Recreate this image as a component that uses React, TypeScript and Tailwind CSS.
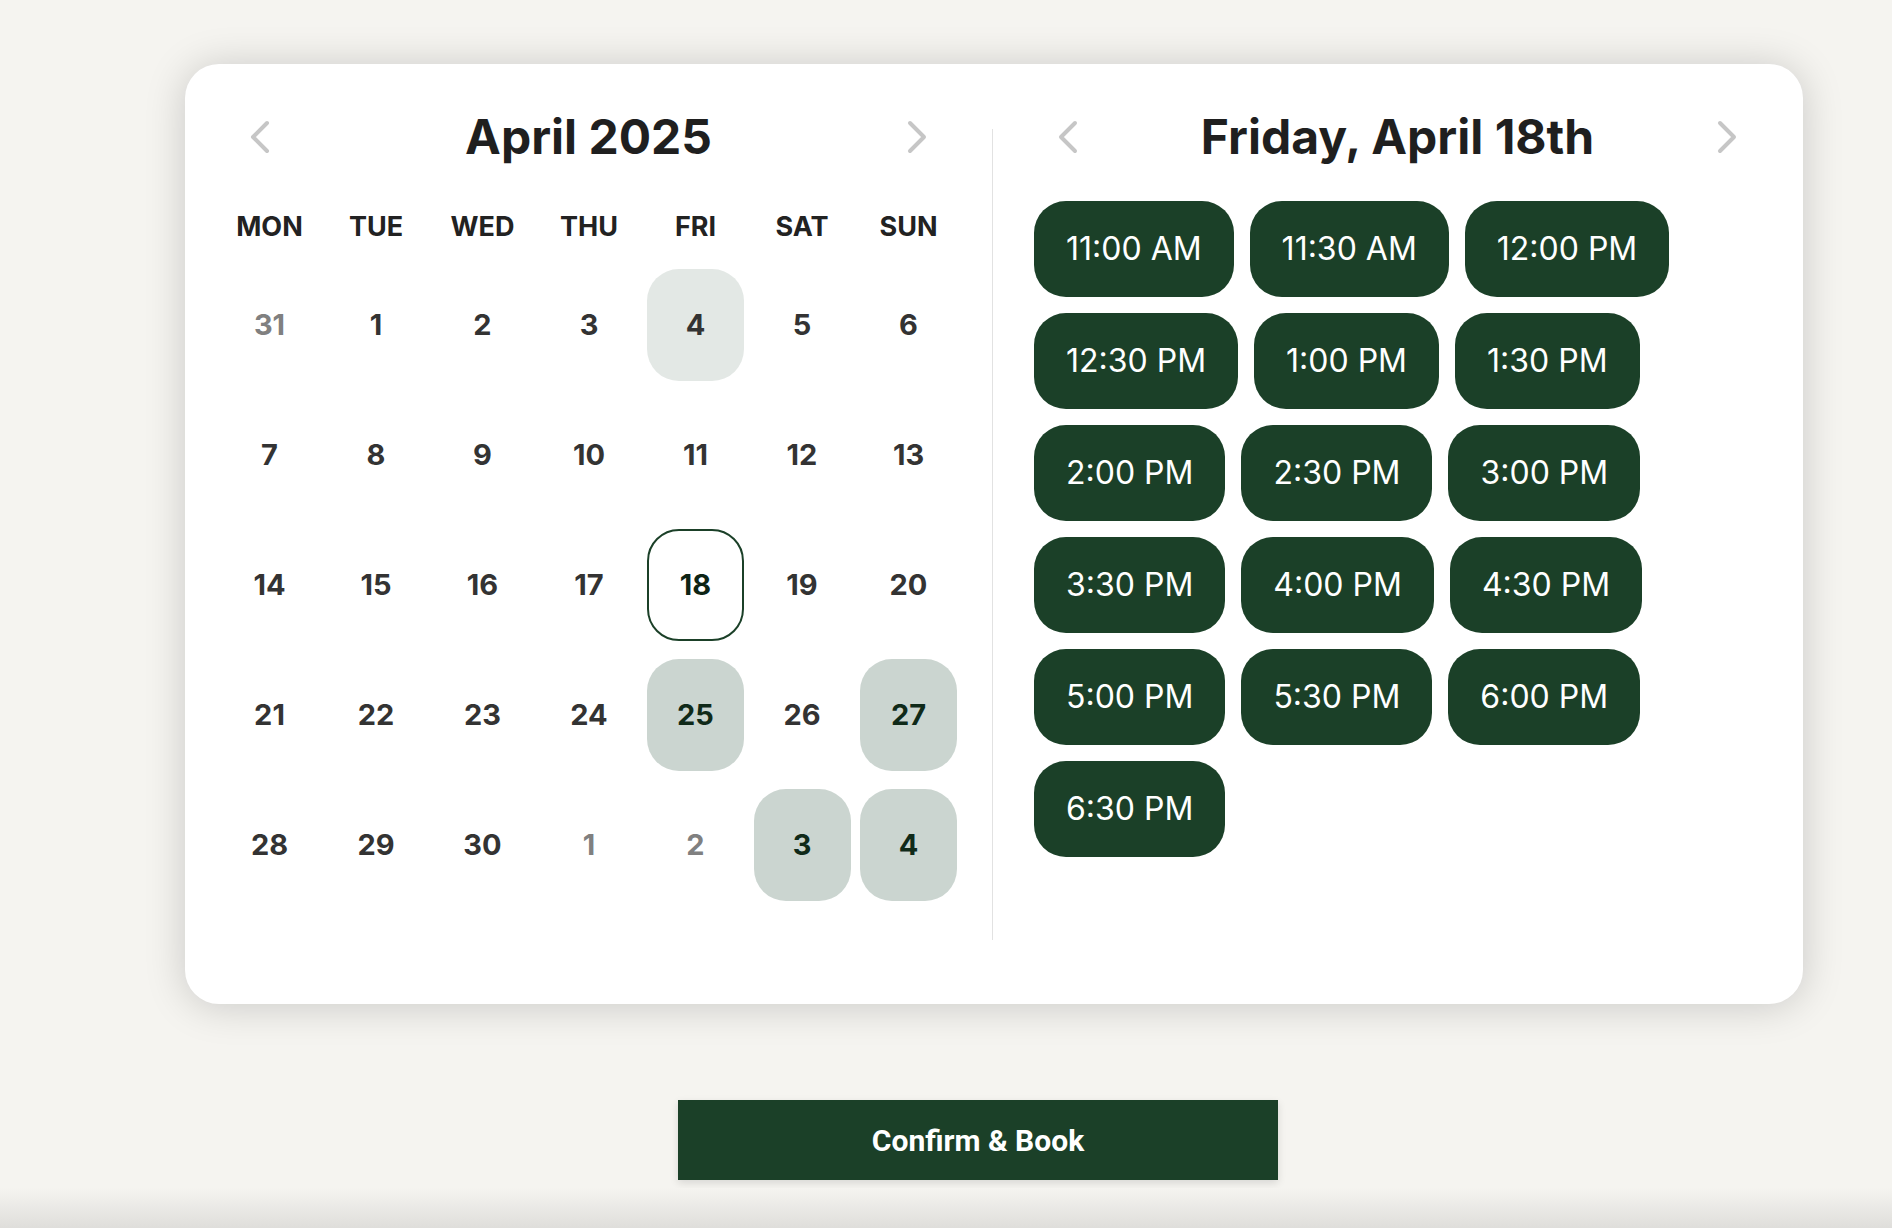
import React from "react";

type DayCell = {
  n: number;
  muted?: boolean;
  tone?: "light" | "avail" | "selected";
};

const weekdays = ["MON", "TUE", "WED", "THU", "FRI", "SAT", "SUN"];

const weeks: DayCell[][] = [
  [{ n: 31, muted: true }, { n: 1 }, { n: 2 }, { n: 3 }, { n: 4, tone: "light" }, { n: 5 }, { n: 6 }],
  [{ n: 7 }, { n: 8 }, { n: 9 }, { n: 10 }, { n: 11 }, { n: 12 }, { n: 13 }],
  [{ n: 14 }, { n: 15 }, { n: 16 }, { n: 17 }, { n: 18, tone: "selected" }, { n: 19 }, { n: 20 }],
  [{ n: 21 }, { n: 22 }, { n: 23 }, { n: 24 }, { n: 25, tone: "avail" }, { n: 26 }, { n: 27, tone: "avail" }],
  [{ n: 28 }, { n: 29 }, { n: 30 }, { n: 1, muted: true }, { n: 2, muted: true }, { n: 3, tone: "avail" }, { n: 4, tone: "avail" }],
];

const slots = [
  "11:00 AM", "11:30 AM", "12:00 PM",
  "12:30 PM", "1:00 PM", "1:30 PM",
  "2:00 PM", "2:30 PM", "3:00 PM",
  "3:30 PM", "4:00 PM", "4:30 PM",
  "5:00 PM", "5:30 PM", "6:00 PM",
  "6:30 PM",
];

function Chevron({ dir }: { dir: "left" | "right" }) {
  return (
    <svg width="20" height="34" viewBox="0 0 20 34" fill="none" className="shrink-0">
      <polyline
        points={dir === "left" ? "17,3 3,17 17,31" : "3,3 17,17 3,31"}
        stroke="#c6c6c6"
        strokeWidth="4"
        strokeLinecap="round"
        strokeLinejoin="round"
      />
    </svg>
  );
}

function PanelHeader({ title }: { title: string }) {
  return (
    <div className="flex h-[48px] items-center justify-between px-[33px]">
      <Chevron dir="left" />
      <h2 className="font-['Inter',sans-serif] text-[48px] leading-[48px] font-bold text-[#1f1f1f]">
        {title}
      </h2>
      <Chevron dir="right" />
    </div>
  );
}

function dayClass(d: DayCell) {
  if (d.tone === "selected") return "border-2 border-[#1b4028] bg-white text-[#0d2415]";
  if (d.tone === "avail") return "bg-[#cbd5d0] text-[#102a19]";
  if (d.tone === "light") return "bg-[#e3e8e5] text-[#333333]";
  if (d.muted) return "text-[#808080]";
  return "text-[#333333]";
}

function MonthCalendar() {
  return (
    <div className="w-[743px] shrink-0">
      <PanelHeader title="April 2025" />
      <div className="ml-[4px] mt-[50px] grid w-[736px] grid-cols-7 gap-x-[9.5px]">
        {weekdays.map((w) => (
          <div
            key={w}
            className="text-center font-['Inter',sans-serif] text-[27px] leading-[32px] font-bold text-[#222222]"
          >
            {w}
          </div>
        ))}
      </div>
      <div className="ml-[4px] mt-[26px] grid w-[736px] grid-cols-7 gap-x-[9.5px] gap-y-[18px]">
        {weeks.flat().map((d, i) => (
          <div
            key={i}
            className={`flex h-[112px] items-center justify-center rounded-[32px] font-['Inter',sans-serif] text-[29px] font-bold ${dayClass(d)}`}
          >
            {d.n}
          </div>
        ))}
      </div>
    </div>
  );
}

function TimeSlots() {
  return (
    <div className="w-[745px] shrink-0">
      <PanelHeader title="Friday, April 18th" />
      <div className="mt-[40px] flex flex-wrap gap-4 pl-[9px]">
        {slots.map((s) => (
          <button
            key={s}
            className="flex h-[96px] items-center rounded-[32px] bg-[#1b4028] px-8 font-['Inter',sans-serif] text-[32px] text-white"
          >
            {s}
          </button>
        ))}
      </div>
    </div>
  );
}

export default function App() {
  return (
    <div className="flex h-[1228px] flex-col overflow-hidden bg-[#f5f4f0]">
      <div className="ml-[185px] w-[1586px] pt-[64px]">
        <div className="flex h-[940px] w-[1618px] rounded-[34px] bg-white px-8 pt-[49px] pb-[47px] shadow-[0_2px_40px_rgba(0,0,0,0.18)]">
          <MonthCalendar />
          <div className="mx-[32px] mt-[16px] mb-[17px] w-px shrink-0 bg-[#e2e2e2]" />
          <TimeSlots />
        </div>
        <div className="mt-[96px] flex justify-center">
          <button className="h-[80px] w-[600px] bg-[#1b4028] font-['Roboto',sans-serif] text-[30px] font-bold text-white shadow-[0_3px_8px_rgba(0,0,0,0.12)]">
            Confirm &amp; Book
          </button>
        </div>
      </div>
      <div className="mt-auto h-[40px] bg-gradient-to-b from-[#f5f4f0] to-[#dfdedb]" />
    </div>
  );
}
